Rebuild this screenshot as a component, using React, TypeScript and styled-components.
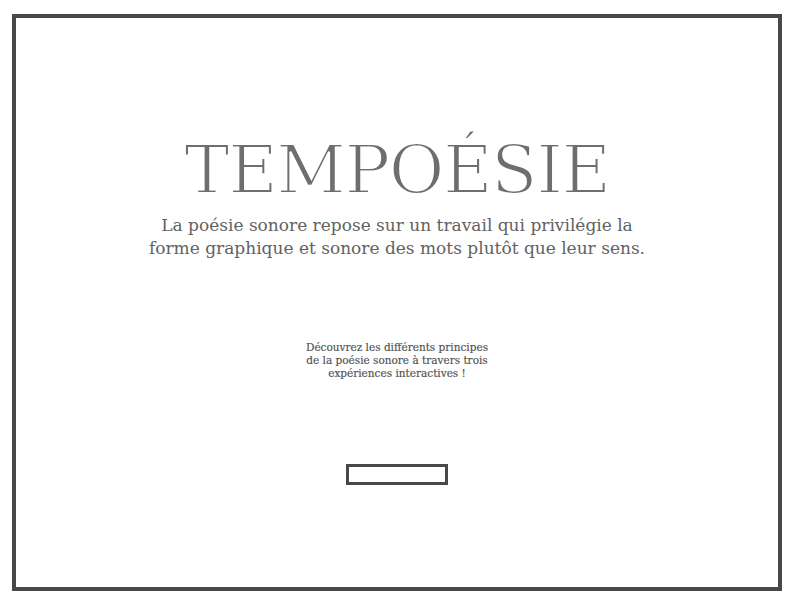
import styled, { createGlobalStyle } from "styled-components";

const GlobalStyle = createGlobalStyle`
  html, body {
    margin: 0;
    padding: 0;
    background: #ffffff;
  }
  body {
    font-family: "DejaVu Serif", "Liberation Serif", serif;
  }
`;

const Page = styled.div`
  width: 799px;
  height: 615px;
  padding: 14px 0 0 12px;
  box-sizing: border-box;
`;

const Frame = styled.main`
  width: 770px;
  height: 577px;
  box-sizing: border-box;
  border: 4px solid #48474c;
  display: flex;
  flex-direction: column;
  align-items: center;
  padding-top: 113px;
`;

const Title = styled.h1`
  margin: 0;
  font-family: "DejaVu Serif", serif;
  font-weight: 400;
  font-size: 68px;
  line-height: 78px;
  color: #6e6e6e;
  letter-spacing: -1.5px;
  -webkit-text-stroke: 2px #ffffff;
  paint-order: fill stroke;
`;

const Lead = styled.p`
  margin: 5px 0 0;
  font-size: 17px;
  line-height: 23px;
  color: #626262;
  text-align: center;
`;

const Hint = styled.p`
  margin: 81px 0 0;
  font-size: 10.5px;
  line-height: 13px;
  color: #505050;
  -webkit-text-stroke: 0.15px #505050;
  text-align: center;
`;

const StartButton = styled.button`
  margin-top: 84px;
  width: 102px;
  height: 21px;
  padding: 0;
  background: #ffffff;
  border: 3px solid #48474c;
  cursor: pointer;
`;

export default function App() {
  return (
    <>
      <GlobalStyle />
      <Page>
        <Frame>
          <Title>TEMPOÉSIE</Title>
          <Lead>
            La poésie sonore repose sur un travail qui privilégie la
            <br />
            forme graphique et sonore des mots plutôt que leur sens.
          </Lead>
          <Hint>
            Découvrez les différents principes
            <br />
            de la poésie sonore à travers trois
            <br />
            expériences interactives !
          </Hint>
          <StartButton aria-label="Commencer" />
        </Frame>
      </Page>
    </>
  );
}
